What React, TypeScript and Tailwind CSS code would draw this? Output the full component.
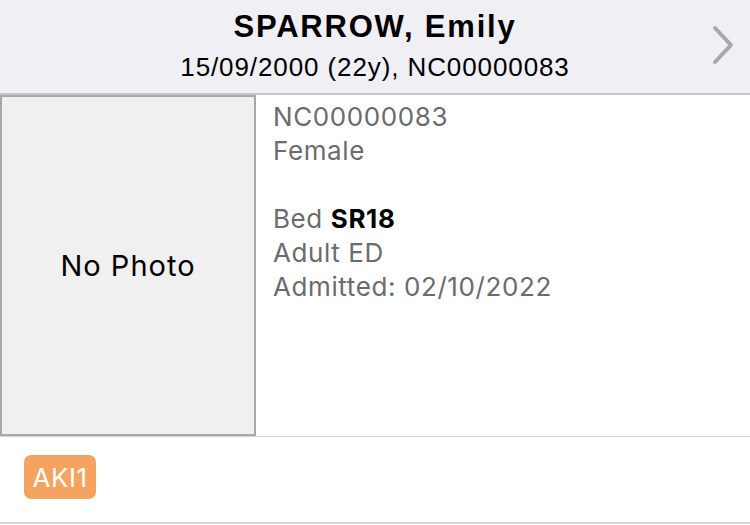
export default function App() {
  return (
    <div className="w-[750px] h-[525px] bg-white overflow-hidden">
      {/* Header */}
      <header className="relative h-[95px] bg-[#efeff4] border-b-2 border-[#c6c6ca] flex flex-col items-center pt-[8px] font-['Liberation_Sans',Arial,sans-serif] text-black">
        <div className="text-[31px] font-bold leading-[38px] tracking-[1.8px]">SPARROW, Emily</div>
        <div className="text-[26px] leading-[30px] mt-[6px] tracking-[0.9px]">15/09/2000 (22y), NC00000083</div>
        <svg className="absolute right-[14px] top-[24px]" width="26" height="42" viewBox="0 0 26 42" fill="none">
          <path d="M5 4 L21 21 L5 38" stroke="#a8a8aa" strokeWidth="4" strokeLinecap="round" strokeLinejoin="round" />
        </svg>
      </header>

      {/* Body */}
      <div className="flex h-[341px] font-['Inter','Open_Sans',sans-serif]">
        <div className="w-[256px] h-full border-2 border-[#a8a8a8] bg-[#f0f0f0] flex items-center justify-center text-[29px] tracking-[1px] text-black">
          No Photo
        </div>
        <div className="flex-1 pl-[17px] pt-[5px] text-[26px] leading-[34px] tracking-[0.6px] text-[#6b6b6b]">
          <div>NC00000083</div>
          <div>Female</div>
          <div className="h-[34px]" />
          <div>
            Bed <span className="font-bold text-black">SR18</span>
          </div>
          <div>Adult ED</div>
          <div>Admitted: 02/10/2022</div>
        </div>
      </div>

      {/* Alerts */}
      <div className="border-t border-[#d4d4d4] h-[88px] border-b-2 border-b-[#d6d6d6] pl-[24px] pt-[18px] font-['Inter','Open_Sans',sans-serif]">
        <span className="inline-flex items-center justify-center w-[72px] h-[44px] rounded-[7px] bg-[#f4a460] text-white text-[26px] tracking-[0.5px]">
          AKI1
        </span>
      </div>
    </div>
  )
}
